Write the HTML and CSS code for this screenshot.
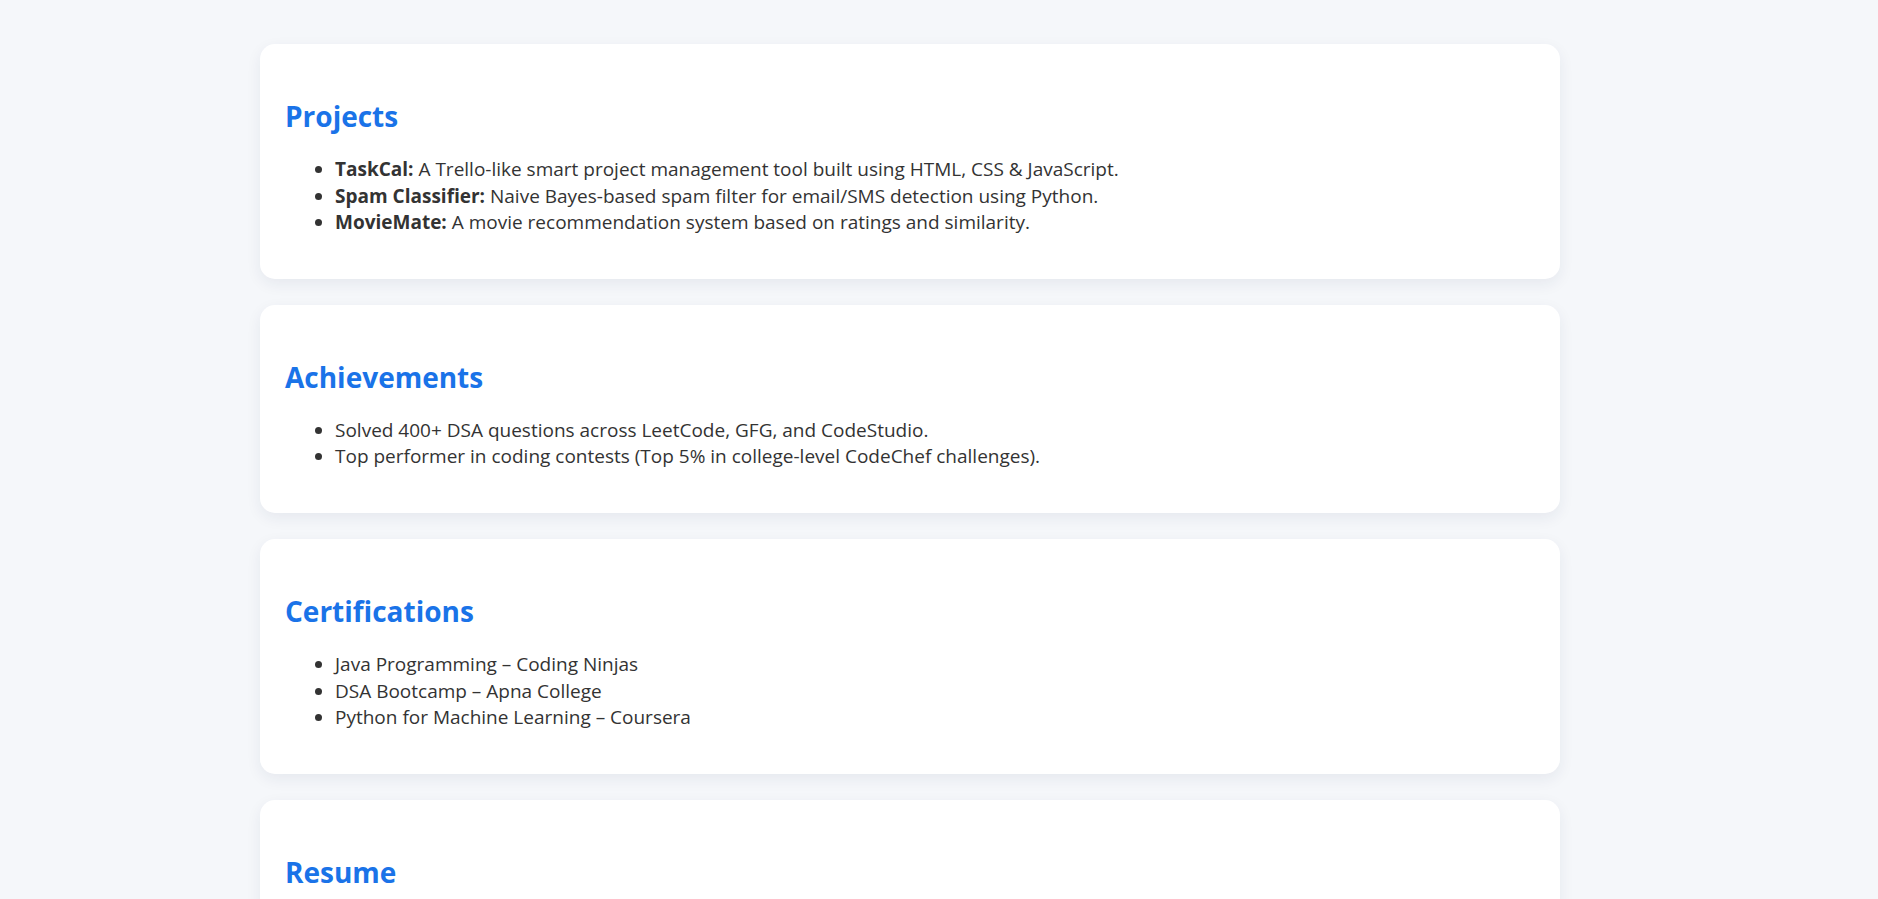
FILE: index.html
```html
<!DOCTYPE html>
<html lang="en">
<head>
<meta charset="utf-8">
<title>Portfolio</title>
<link rel="stylesheet" href="styles.css">
</head>
<body>
<main class="page">
  <section class="card">
    <h2 class="card-title">Projects</h2>
    <ul class="card-list">
      <li><strong>TaskCal:</strong> A Trello-like smart project management tool built using HTML, CSS &amp; JavaScript.</li>
      <li><strong>Spam Classifier:</strong> Naive Bayes-based spam filter for email/SMS detection using Python.</li>
      <li><strong>MovieMate:</strong> A movie recommendation system based on ratings and similarity.</li>
    </ul>
  </section>
  <section class="card">
    <h2 class="card-title">Achievements</h2>
    <ul class="card-list">
      <li>Solved 400+ DSA questions across LeetCode, GFG, and CodeStudio.</li>
      <li>Top performer in coding contests (Top 5% in college-level CodeChef challenges).</li>
    </ul>
  </section>
  <section class="card">
    <h2 class="card-title">Certifications</h2>
    <ul class="card-list">
      <li>Java Programming – Coding Ninjas</li>
      <li>DSA Bootcamp – Apna College</li>
      <li>Python for Machine Learning – Coursera</li>
    </ul>
  </section>
  <section class="card">
    <h2 class="card-title">Resume</h2>
    <ul class="card-list">
      <li>Download my resume</li>
    </ul>
  </section>
</main>
</body>
</html>
```

FILE: styles.css
```css
html, body {
  margin: 0;
  padding: 0;
}
body {
  background: #f5f7fa;
  font-family: "Open Sans", "Noto Sans", sans-serif;
  color: #333333;
}
.page {
  display: flex;
  flex-direction: column;
  gap: 26px;
  width: 1300px;
  padding: 44px 0 60px 260px;
}
.card {
  background: #ffffff;
  border-radius: 15px;
  padding: 25px;
  box-shadow: 0 5px 15px rgba(30, 40, 80, 0.07);
}
.card-title {
  margin: 27px 0 20px;
  font-size: 28px;
  line-height: 40px;
  font-weight: 700;
  color: #1a73e8;
}
.card-list {
  margin: 20px 0 18px;
  padding-left: 50px;
  font-size: 19px;
  line-height: 26.6px;
}
.card-list strong {
  font-weight: 700;
}
```
